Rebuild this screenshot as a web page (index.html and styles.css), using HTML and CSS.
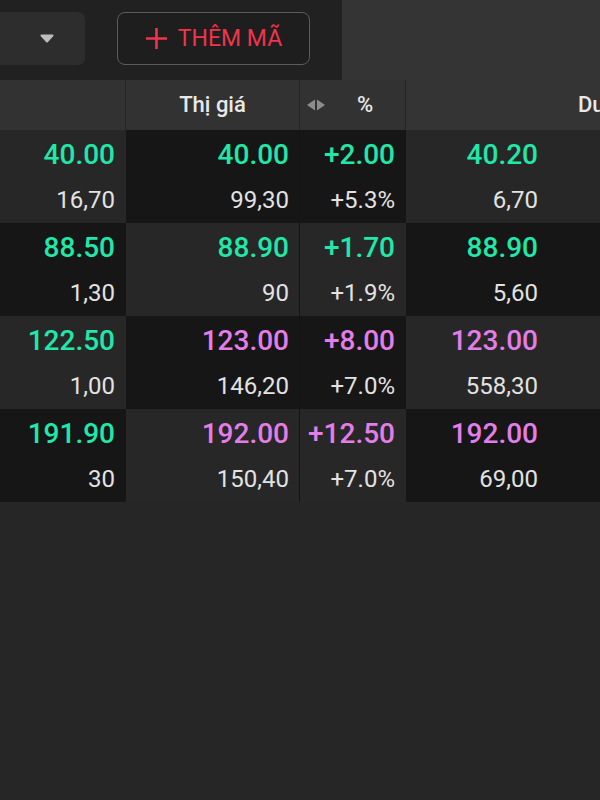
FILE: index.html
```html
<!DOCTYPE html>
<html>
<head>
	<title>Bảng giá</title>
	<link rel="stylesheet" href="styles.css">
</head>
<body>
	<div class="top">
		<div class="toolbar">
			<div class="select">
				<svg class="caret" width="14" height="9" viewBox="0 0 14 9"><path d="M1.5 1.5 H12.5 L7 7.5 Z" fill="#bdbdbd" stroke="#bdbdbd" stroke-width="2" stroke-linejoin="round"/></svg>
			</div>
			<button class="add-btn" type="button">
				<svg width="23" height="23" viewBox="0 0 23 23"><path d="M11.5 1 V22 M1 11.5 H22" stroke="currentColor" stroke-width="2.6" fill="none"/></svg>
				<span>THÊM MÃ</span>
			</button>
		</div>
	</div>

	<div class="board">
		<div class="row head">
			<div class="cell c1"></div>
			<div class="cell c2">Thị giá</div>
			<div class="cell c3">
				<svg class="sort" width="18" height="12" viewBox="0 0 18 12"><path d="M0 6 L8 0.5 V11.5 Z M10 0.5 L18 6 L10 11.5 Z" fill="#8c8c8c"/></svg>
				<span class="pct">%</span>
			</div>
			<div class="cell c4"></div>
			<div class="cell c5">Dư mua</div>
		</div>

		<div class="row odd">
			<div class="cell c1"><div class="big up">40.00</div><div class="small">16,70</div></div>
			<div class="cell c2"><div class="big up">40.00</div><div class="small">99,30</div></div>
			<div class="cell c3"><div class="big up">+2.00</div><div class="small">+5.3%</div></div>
			<div class="cell c4"><div class="big up">40.20</div><div class="small">6,70</div></div>
			<div class="cell c5"></div>
		</div>
		<div class="row even">
			<div class="cell c1"><div class="big up">88.50</div><div class="small">1,30</div></div>
			<div class="cell c2"><div class="big up">88.90</div><div class="small">90</div></div>
			<div class="cell c3"><div class="big up">+1.70</div><div class="small">+1.9%</div></div>
			<div class="cell c4"><div class="big up">88.90</div><div class="small">5,60</div></div>
			<div class="cell c5"></div>
		</div>
		<div class="row odd">
			<div class="cell c1"><div class="big up">122.50</div><div class="small">1,00</div></div>
			<div class="cell c2"><div class="big ceil">123.00</div><div class="small">146,20</div></div>
			<div class="cell c3"><div class="big ceil">+8.00</div><div class="small">+7.0%</div></div>
			<div class="cell c4"><div class="big ceil">123.00</div><div class="small">558,30</div></div>
			<div class="cell c5"></div>
		</div>
		<div class="row even">
			<div class="cell c1"><div class="big up">191.90</div><div class="small">30</div></div>
			<div class="cell c2"><div class="big ceil">192.00</div><div class="small">150,40</div></div>
			<div class="cell c3"><div class="big ceil">+12.50</div><div class="small">+7.0%</div></div>
			<div class="cell c4"><div class="big ceil">192.00</div><div class="small">69,00</div></div>
			<div class="cell c5"></div>
		</div>
	</div>
</body>
</html>
```

FILE: styles.css
```css
body {
	margin: 0;
	background: #262626;
	font-family: Roboto, "Noto Sans", sans-serif;
	overflow: hidden;
}

/* top toolbar */
.top {
	display: flex;
	height: 80px;
	background: #343434;
}
.toolbar {
	width: 342px;
	display: flex;
	align-items: flex-start;
	gap: 32px;
	padding-top: 12px;
	box-sizing: border-box;
	background: #212121;
}
.select {
	width: 85px;
	height: 53px;
	padding-left: 9px;
	box-sizing: border-box;
	display: flex;
	align-items: center;
	justify-content: center;
	background: #2d2d2d;
	border-radius: 0 7px 7px 0;
}
.add-btn {
	width: 193px;
	height: 53px;
	padding: 0;
	display: flex;
	align-items: center;
	justify-content: center;
	gap: 10px;
	background: #1e1e1e;
	border: 1.5px solid #5c5c5c;
	border-radius: 8px;
	color: #f0344c;
	font-family: Roboto, sans-serif;
	font-size: 23px;
	font-weight: 400;
}

/* board */
.row {
	display: flex;
	height: 93px;
}
.cell {
	box-sizing: border-box;
	flex-shrink: 0;
	padding-right: 10px;
	text-align: right;
	border-right: 1px solid transparent;
}
.c1 { width: 126px; }
.c2 { width: 174px; }
.c3 { width: 106px; }
.c4 { width: 142px; border-right: 0; }
.c5 { width: 130px; border-right: 0; }

.head {
	height: 50px;
	background: #323232;
	color: #e8e8e8;
	font-size: 22px;
	font-weight: 500;
	line-height: 50px;
}
.head .cell {
	padding-right: 0;
	text-align: center;
	border-right-color: #252525;
}
.head .c4,
.head .c5 {
	background: #343434;
}
.head .c3 {
	display: flex;
	align-items: center;
	padding-left: 7px;
}
.head .pct {
	flex: 1;
	text-align: center;
}
.head .c5 {
	text-align: left;
	padding-left: 30px;
	white-space: nowrap;
}

.odd .c1, .odd .c4, .odd .c5,
.even .c2, .even .c3 {
	background: #272727;
}
.odd .c2, .odd .c3,
.even .c1, .even .c4, .even .c5 {
	background: #161616;
}
.row .c2 {
	border-right-color: #141414;
}
.head .c2 {
	border-right-color: #252525;
}

.big {
	font-size: 28px;
	font-weight: 500;
	line-height: 50px;
}
.small {
	font-size: 24px;
	font-weight: 400;
	color: #e2e2e2;
	line-height: 40px;
}
.up { color: #1fe8a8; }
.ceil { color: #e37ee9; }
```
